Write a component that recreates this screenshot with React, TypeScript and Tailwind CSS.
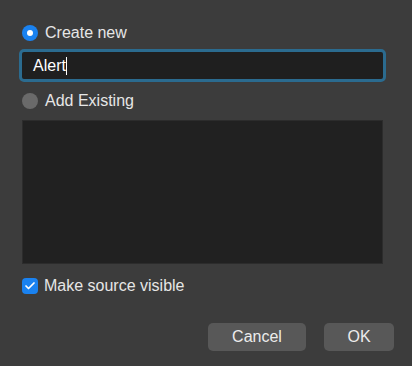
import { Check } from "lucide-react";

export default function App() {
  return (
    <div
      className="w-[412px] h-[366px] bg-[#3c3c3c] text-[#e6e6e6] pl-[22px] pr-[29px] pt-[24px] text-[16px] flex flex-col"
      style={{ fontFamily: '"Helvetica Neue", "Liberation Sans", Arial, sans-serif' }}
    >
      <label className="flex items-center gap-[7px] h-[18px]">
        <span className="w-[16px] h-[16px] rounded-full bg-[#1a82f0] flex items-center justify-center">
          <span className="w-[6px] h-[6px] rounded-full bg-white" />
        </span>
        <span>Create new</span>
      </label>

      <div className="mt-[7px] -mx-[3px] rounded-[5px] border-[3px] border-[#2b6b8f] bg-[#1f1f1f] h-[33px] flex items-center pl-[11px]">
        <span className="text-white">Alert</span>
        <span className="w-px h-[18px] bg-white" />
      </div>

      <label className="flex items-center gap-[7px] h-[18px] mt-[10px]">
        <span className="w-[16px] h-[16px] rounded-full bg-[#6a6a6a]" />
        <span>Add Existing</span>
      </label>

      <div className="mt-[10px] h-[144px] bg-[#212121] border border-[#2c2c2c]" />

      <label className="flex items-center gap-[6px] h-[18px] mt-[13px]">
        <span className="w-[16px] h-[16px] rounded-[4px] bg-[#1a82f0] flex items-center justify-center">
          <Check className="w-[12px] h-[12px] text-white" strokeWidth={3.5} />
        </span>
        <span>Make source visible</span>
      </label>

      <div className="flex justify-end gap-[18px] mt-[28px] mr-[-11px]">
        <button className="w-[98px] h-[28px] rounded-[5px] bg-[#585858] text-[#ececec] text-[16px]">
          Cancel
        </button>
        <button className="w-[70px] h-[28px] rounded-[5px] bg-[#585858] text-[#ececec] text-[16px]">
          OK
        </button>
      </div>
    </div>
  );
}
